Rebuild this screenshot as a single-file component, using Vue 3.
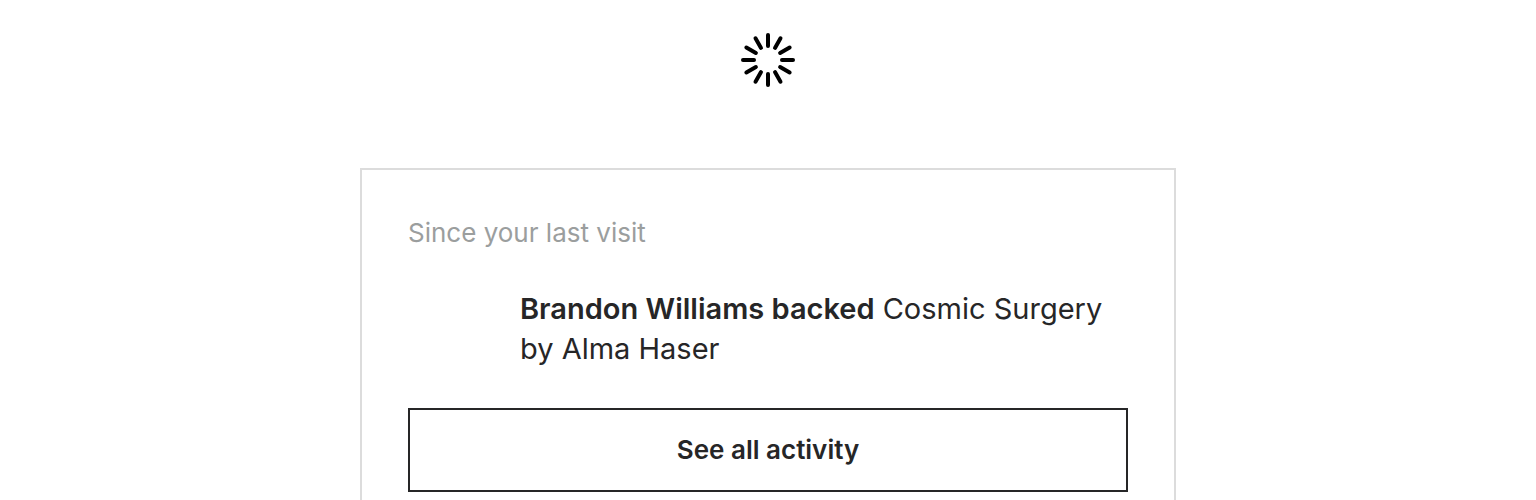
<script setup>
const spokes = Array.from({ length: 12 }, (_, i) => i * 30)
</script>

<template>
  <main class="page">
    <svg class="spinner" viewBox="0 0 56 56" role="img" aria-label="Loading">
      <line
        v-for="angle in spokes"
        :key="angle"
        x1="28"
        y1="3"
        x2="28"
        y2="14"
        :transform="`rotate(${angle} 28 28)`"
      />
    </svg>
    <section class="card">
      <h2 class="heading">Since your last visit</h2>
      <p class="activity"><strong>Brandon Williams backed</strong> Cosmic Surgery by Alma Haser</p>
      <button class="more" type="button">See all activity</button>
    </section>
  </main>
</template>

<style>
body {
  margin: 0;
  background: #fff;
}
</style>

<style scoped>
.page {
  display: flex;
  flex-direction: column;
  align-items: center;
  gap: 80px;
  padding: 32px 24px 0;
  font-family: Inter, "Liberation Sans", sans-serif;
  color: #262627;
}
.spinner {
  width: 56px;
  height: 56px;
  stroke: #000;
  stroke-width: 4;
  stroke-linecap: round;
}
.card {
  box-sizing: border-box;
  width: 100%;
  max-width: 816px;
  padding: 47px 46px 48px;
  border: 2px solid #dcdcdc;
}
.heading {
  margin: 0;
  font-size: 26px;
  line-height: 32px;
  font-weight: 400;
  color: #9b9e9e;
}
.activity {
  margin: 40px 0 39px;
  padding-left: 112px;
  font-size: 29px;
  line-height: 40px;
}
.activity strong {
  font-weight: 600;
}
.more {
  display: block;
  width: 100%;
  padding: 24px;
  border: 2px solid #262627;
  border-radius: 0;
  background: #fff;
  color: #262627;
  font: 600 26px/32px Inter, "Liberation Sans", sans-serif;
}
</style>
